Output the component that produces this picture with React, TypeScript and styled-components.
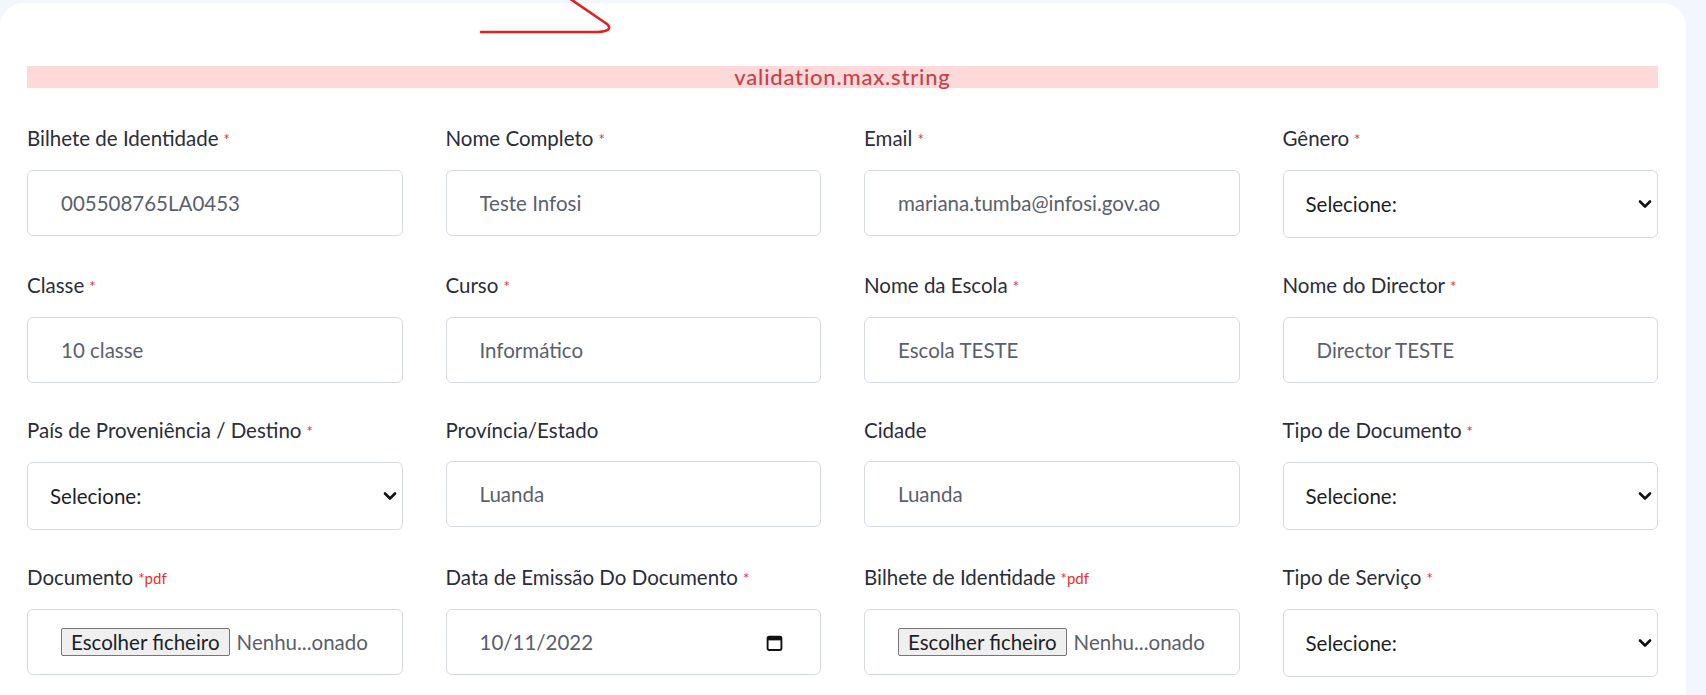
import React from "react";
import styled, { createGlobalStyle } from "styled-components";

const GlobalStyle = createGlobalStyle`
  html, body {
    margin: 0;
    padding: 0;
    background: #f3f6fd;
    font-family: "Lato", "Noto Sans", sans-serif;
  }
  * { box-sizing: border-box; }
`;

const Page = styled.div`
  padding: 3px 20px 0 0;
  min-height: 695px;
`;

const Card = styled.div`
  position: relative;
  background: #ffffff;
  border-radius: 24px 24px 0 0;
  padding: 63px 28px 40px 27px;
  min-height: 692px;
`;

const Annotation = styled.svg`
  position: absolute;
  left: 0;
  top: -3px;
  overflow: visible;
  pointer-events: none;
`;

const Alert = styled.div`
  height: 22px;
  background: #fdd9d9;
  color: #c6414a;
  font-size: 22px;
  font-weight: 500;
  line-height: 22px;
  letter-spacing: 0.8px;
  text-align: center;
`;

const FormGrid = styled.div`
  margin-top: 36px;
  display: grid;
  grid-template-columns: repeat(4, minmax(0, 1fr));
  column-gap: 43px;
  row-gap: 33px;
  align-items: start;
`;

const Field = styled.div`
  display: flex;
  flex-direction: column;
  min-width: 0;
`;

const Label = styled.label`
  font-size: 20.5px;
  line-height: 28px;
  color: #2b2d3a;
  margin-bottom: 17px;
  white-space: nowrap;
`;

const Req = styled.span`
  color: #ef2b2b;
  font-size: 15px;
  margin-left: 5px;
  vertical-align: 1px;
`;

const TextInput = styled.input`
  height: 66px;
  width: 100%;
  border: 1px solid #d6dae3;
  border-radius: 6px;
  padding: 0 12px 0 33px;
  font-family: inherit;
  font-size: 20.5px;
  color: #5b606c;
  background: #fff;
  outline: none;
`;

const SelectWrap = styled.div`
  position: relative;
`;

const Select = styled.select`
  appearance: none;
  -webkit-appearance: none;
  height: 68px;
  width: 100%;
  border: 1px solid #d6dae3;
  border-radius: 6px;
  padding: 0 30px 0 22px;
  font-family: inherit;
  font-size: 20.5px;
  color: #1d1f26;
  background: #fff;
  outline: none;
`;

const Chevron = styled.svg`
  position: absolute;
  right: 6px;
  top: 50%;
  margin-top: -5px;
  pointer-events: none;
`;

const Box = styled.div`
  height: 66px;
  border: 1px solid #d6dae3;
  border-radius: 6px;
  display: flex;
  align-items: center;
  padding: 0 37px 0 33px;
  background: #fff;
  overflow: hidden;
`;

const DateText = styled.span`
  flex: 1;
  font-size: 20.5px;
  color: #5b606c;
`;

const FileButton = styled.button`
  flex-shrink: 0;
  white-space: nowrap;
  height: 28px;
  padding: 0 9px;
  background: #efefef;
  border: 1px solid #767676;
  border-radius: 2px;
  font-family: inherit;
  font-size: 20.5px;
  line-height: 26px;
  color: #1d1f26;
  margin-right: 7px;
`;

const FileName = styled.span`
  font-size: 20.5px;
  color: #5b606c;
  white-space: nowrap;
`;

const Calendar = () => (
  <svg width="17" height="17" viewBox="0 0 16 16" fill="none">
    <rect x="1.5" y="2.5" width="13" height="12.5" rx="1.5" stroke="#111" strokeWidth="1.8" />
    <rect x="1.5" y="2.5" width="13" height="3.5" fill="#111" />
  </svg>
);

type Kind = "text" | "select" | "file" | "date";

interface FieldDef {
  label: string;
  req?: "star" | "pdf";
  kind: Kind;
  value?: string;
}

const fields: FieldDef[] = [
  { label: "Bilhete de Identidade", req: "star", kind: "text", value: "005508765LA0453" },
  { label: "Nome Completo", req: "star", kind: "text", value: "Teste Infosi" },
  { label: "Email", req: "star", kind: "text", value: "mariana.tumba@infosi.gov.ao" },
  { label: "Gênero", req: "star", kind: "select" },
  { label: "Classe", req: "star", kind: "text", value: "10 classe" },
  { label: "Curso", req: "star", kind: "text", value: "Informático" },
  { label: "Nome da Escola", req: "star", kind: "text", value: "Escola TESTE" },
  { label: "Nome do Director", req: "star", kind: "text", value: "Director TESTE" },
  { label: "País de Proveniência / Destino", req: "star", kind: "select" },
  { label: "Província/Estado", kind: "text", value: "Luanda" },
  { label: "Cidade", kind: "text", value: "Luanda" },
  { label: "Tipo de Documento", req: "star", kind: "select" },
  { label: "Documento", req: "pdf", kind: "file" },
  { label: "Data de Emissão Do Documento", req: "star", kind: "date", value: "10/11/2022" },
  { label: "Bilhete de Identidade", req: "pdf", kind: "file" },
  { label: "Tipo de Serviço", req: "star", kind: "select" },
];

const Control = ({ f }: { f: FieldDef }) => {
  switch (f.kind) {
    case "select":
      return (
        <SelectWrap>
          <Select defaultValue="">
            <option value="">Selecione:</option>
          </Select>
          <Chevron width="14" height="10" viewBox="0 0 14 10">
            <path d="M2 2.5 L7 7.5 L12 2.5" stroke="#111" strokeWidth="2.6" fill="none" strokeLinecap="round" strokeLinejoin="round" />
          </Chevron>
        </SelectWrap>
      );
    case "file":
      return (
        <Box>
          <FileButton type="button">Escolher ficheiro</FileButton>
          <FileName>Nenhu...onado</FileName>
        </Box>
      );
    case "date":
      return (
        <Box>
          <DateText>{f.value}</DateText>
          <Calendar />
        </Box>
      );
    default:
      return <TextInput type="text" defaultValue={f.value} />;
  }
};

export default function App() {
  return (
    <>
      <GlobalStyle />
      <Page>
        <Card>
          <Annotation width="700" height="40">
            <path
              d="M481 32 L598 32 Q614 31 607 24 L566 -4"
              stroke="#e3201e"
              strokeWidth="2.6"
              fill="none"
              strokeLinecap="round"
              strokeLinejoin="round"
            />
          </Annotation>
          <Alert>validation.max.string</Alert>
          <FormGrid>
            {fields.map((f, i) => (
              <Field key={i}>
                <Label>
                  {f.label}
                  {f.req === "star" && <Req>*</Req>}
                  {f.req === "pdf" && <Req>*pdf</Req>}
                </Label>
                <Control f={f} />
              </Field>
            ))}
          </FormGrid>
        </Card>
      </Page>
    </>
  );
}
